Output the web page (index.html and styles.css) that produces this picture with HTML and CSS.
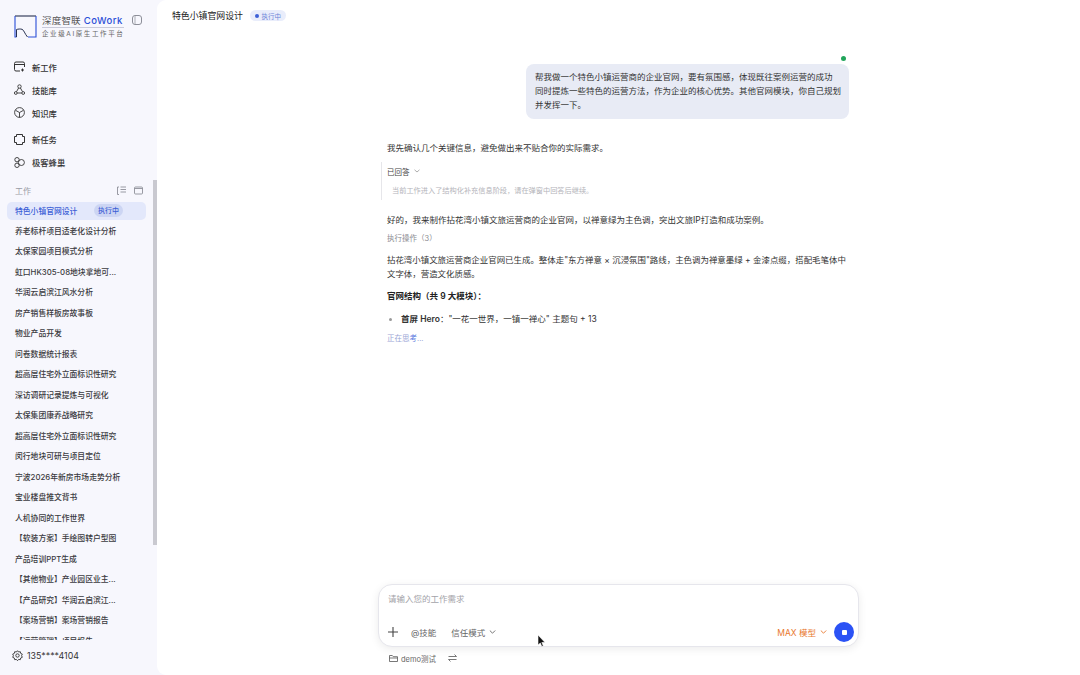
FILE: index.html
```html
<!DOCTYPE html>
<html lang="zh-CN">
<head>
    <meta charset="UTF-8">
    <meta name="viewport" content="width=device-width, initial-scale=1.0">
    <title>深度智联 CoWork</title>
    <link rel="stylesheet" href="styles.css">
</head>
<body>
    <div class="app">
        <aside class="sidebar">
            <div class="brand">
                <svg class="brand-logo" width="23" height="23" viewBox="0 0 23 23" fill="none">
                    <path d="M1 1h21" stroke="#27304f" stroke-width="1.100"/>
                    <path d="M1 1v21h1.500M14 22h8V1" stroke="#2b4fd8" stroke-width="1.100"/>
                    <path d="M2.500 22v-7.500c1.500-.5 4-.7 5.500-.2 2 .7 2.500 4.200 5.500 7.700" stroke="#27304f" stroke-width="1"/>
                </svg>
                <div class="brand-text">
                    <div class="brand-name">深度智联 <b>CoWork</b></div>
                    <div class="brand-sub">企业级AI原生工作平台</div>
                </div>
                <svg class="brand-toggle" width="10" height="10" viewBox="0 0 10 10" fill="none">
                    <rect x=".5" y=".5" width="9" height="9" rx="2.500" stroke="#8d8f99"/>
                    <path d="M3 1v8" stroke="#c5c6cc" stroke-width="1.500"/>
                </svg>
            </div>

            <nav class="nav">
                <a class="nav-item">
                    <svg width="11" height="11" viewBox="0 0 11 11" fill="none" stroke="#333"><path d="M6 10H2a1.500 1.500 0 0 1-1.500-1.500v-6A1.500 1.500 0 0 1 2 1h7a1.500 1.500 0 0 1 1.500 1.500V6M.5 3.500h10M8.500 7.500v3M7 9h3"/></svg>
                    新工作
                </a>
                <a class="nav-item">
                    <svg width="11" height="11" viewBox="0 0 11 11" fill="none" stroke="#333" stroke-width=".9"><circle cx="5.500" cy="2.500" r="1.700"/><circle cx="1.800" cy="9" r="1.400"/><circle cx="9.200" cy="9" r="1.400"/><path d="M4.600 4 2.500 7.700M6.400 4l2.100 3.700M3.200 9h4.600"/></svg>
                    技能库
                </a>
                <a class="nav-item">
                    <svg width="11" height="11" viewBox="0 0 11 11" fill="none" stroke="#333" stroke-width=".9"><circle cx="5.500" cy="5.500" r="4.900"/><path d="M1.500 3.300 5.500 5.500l4-2.200M5.500 5.500v5"/></svg>
                    知识库
                </a>
                <a class="nav-item nav-gap">
                    <svg width="11" height="11" viewBox="0 0 11 11" fill="none" stroke="#333"><path d="M2.500.5h6v2h2v6h-2v2h-6v-2h-2v-6h2z"/></svg>
                    新任务
                </a>
                <a class="nav-item">
                    <svg width="11" height="11" viewBox="0 0 11 11" fill="none" stroke="#333" stroke-width=".9"><circle cx="3" cy="2.700" r="2.200"/><circle cx="3" cy="8.300" r="2.200"/><circle cx="7.400" cy="5.500" r="3"/></svg>
                    极客蜂巢
                </a>
            </nav>

            <div class="section-head">
                <span>工作</span>
                <svg width="9" height="9" viewBox="0 0 9 9" fill="none" stroke="#8d8f99" stroke-width=".9"><path d="M.5 1v7.500h1.500M3.500 1H9M3.500 3.500H9M3.500 6H9M.5 1H2"/></svg>
                <svg class="section-last" width="9" height="9" viewBox="0 0 9 9" fill="none" stroke="#8d8f99" stroke-width=".9"><rect x=".5" y="1" width="8" height="7" rx="1"/><path d="M.5 2.500h8"/></svg>
            </div>

            <div class="work-list">
                <div class="work-item active"><span>特色小镇官网设计</span><em class="work-badge">执行中</em></div>
                <div class="work-item">养老标杆项目适老化设计分析</div>
                <div class="work-item">太保家园项目模式分析</div>
                <div class="work-item">虹口HK305-08地块拿地可...</div>
                <div class="work-item">华润云启滨江风水分析</div>
                <div class="work-item">房产销售样板房故事板</div>
                <div class="work-item">物业产品开发</div>
                <div class="work-item">问卷数据统计报表</div>
                <div class="work-item">超高层住宅外立面标识性研究</div>
                <div class="work-item">深访调研记录提炼与可视化</div>
                <div class="work-item">太保集团康养战略研究</div>
                <div class="work-item">超高层住宅外立面标识性研究</div>
                <div class="work-item">闵行地块可研与项目定位</div>
                <div class="work-item">宁波2026年新房市场走势分析</div>
                <div class="work-item">宝业楼盘推文背书</div>
                <div class="work-item">人机协同的工作世界</div>
                <div class="work-item">【软装方案】手绘图转户型图</div>
                <div class="work-item">产品培训PPT生成</div>
                <div class="work-item">【其他物业】产业园区业主...</div>
                <div class="work-item">【产品研究】华润云启滨江...</div>
                <div class="work-item">【案场营销】案场营销报告</div>
                <div class="work-item">【运营管理】项目报告</div>
            </div>

            <div class="user">
                <svg width="11" height="11" viewBox="0 0 11 11" fill="none" stroke="#333" stroke-width=".9"><path d="M5.500.7 6.600 2l1.700-.3.400 1.700 1.600.7-.7 1.600.7 1.600-1.600.7-.4 1.700-1.700-.3-1.100 1.300-1.100-1.300-1.700.3-.4-1.700-1.600-.7.700-1.600-.7-1.600 1.600-.7.4-1.700 1.700.3z"/><circle cx="5.500" cy="5.500" r="1.700"/></svg>
                135****4104
            </div>
            <div class="scroll-thumb"></div>
        </aside>

        <main class="main">
            <header class="topbar">
                <h1>特色小镇官网设计</h1>
                <span class="status"><i></i>执行中</span>
            </header>

            <section class="thread">
                <div class="online-dot"></div>
                <div class="bubble">帮我做一个特色小镇运营商的企业官网，要有氛围感，体现既往案例运营的成功<br>同时提炼一些特色的运营方法，作为企业的核心优势。其他官网模块，你自己规划<br>并发挥一下。</div>

                <p class="para first">我先确认几个关键信息，避免做出来不贴合你的实际需求。</p>

                <div class="answered">
                    <div class="answered-title">已回答 <svg width="6" height="4" viewBox="0 0 6 4" fill="none" stroke="#999" stroke-width=".8"><path d="M.5.800 3 3 5.500.800"/></svg></div>
                    <div class="answered-note">当前工作进入了结构化补充信息阶段，请在弹窗中回答后继续。</div>
                </div>

                <p class="para reply">好的，我来制作拈花湾小镇文旅运营商的企业官网，以禅意绿为主色调，突出文旅IP打造和成功案例。</p>
                <div class="ops">执行操作（3）</div>
                <p class="para summary">拈花湾小镇文旅运营商企业官网已生成。整体走"东方禅意 × 沉浸氛围"路线，主色调为禅意墨绿 + 金漆点缀，搭配毛笔体中<br>文字体，营造文化质感。</p>
                <div class="para-head">官网结构（共 9 大模块）：</div>
                <div class="clip-line">
                    <ul class="modules"><li><b>首屏 Hero</b>："一花一世界，一镇一禅心" 主题句 + 13</li></ul>
                </div>
                <div class="thinking">正在思<span>考</span>...</div>
            </section>

            <section class="composer-wrap">
                <div class="composer">
                    <div class="placeholder">请输入您的工作需求</div>
                    <div class="tools">
                        <svg class="plus" width="10" height="10" viewBox="0 0 10 10" stroke="#444" stroke-width="1.100"><path d="M5 0v10M0 5h10"/></svg>
                        <span class="tool">@技能</span>
                        <span class="tool trust">信任模式 <svg width="7" height="4" viewBox="0 0 7 4" fill="none" stroke="#666" stroke-width=".9"><path d="M.8.500 3.500 3.200 6.200.500"/></svg></span>
                        <span class="model">MAX 模型 <svg width="7" height="4" viewBox="0 0 7 4" fill="none" stroke="#e8772e" stroke-width=".9"><path d="M.8.500 3.500 3.200 6.200.500"/></svg></span>
                        <button class="stop"><i></i></button>
                    </div>
                </div>
                <div class="project">
                    <svg width="9" height="9" viewBox="0 0 9 9" fill="none" stroke="#555" stroke-width=".8"><path d="M.5 7.500v-6h2.800l1 1.200h4.200v4.800zM.5 4h8"/></svg>
                    <span>demo测试</span>
                    <svg class="swap" width="9" height="8" viewBox="0 0 9 8" fill="none" stroke="#555" stroke-width=".8"><path d="M.5 2.500h8L6.500.5M8.500 5.500h-8l2 2"/></svg>
                </div>
            </section>
        </main>
    </div>

    <svg class="cursor" width="9" height="13" viewBox="0 0 9 13"><path d="M1 0v10l2.300-2 1.500 3.500 1.500-.7-1.500-3.300H8z" fill="#111" stroke="#fff" stroke-width=".6"/></svg>
</body>
</html>
```

FILE: styles.css
```css
* {
    box-sizing: border-box;
}
html, body {
    height: 100%;
}
body {
    margin: 0;
    overflow: hidden;
    background-color: #f7f7fd;
    color: #333;
    font-family: "Inter", "Noto Sans CJK SC", sans-serif;
}
.app {
    display: flex;
    height: 675px;
}

/* Sidebar */
.sidebar {
    position: relative;
    display: flex;
    flex-direction: column;
    width: 157px;
    flex-shrink: 0;
}
.brand {
    display: flex;
    align-items: flex-start;
    height: 55px;
    padding: 15px 0 0 14px;
}
.brand-logo {
    flex-shrink: 0;
    margin-right: 5px;
}
.brand-text {
    width: 82px;
}
.brand-name {
    height: 13px;
    border-bottom: 1px solid #c9cbdb;
    font-size: 9.500px;
    line-height: 11px;
    letter-spacing: .2px;
    white-space: nowrap;
    color: #555;
}
.brand-name b {
    color: #2b4fd8;
    font-weight: 500;
    font-size: 9.500px;
    letter-spacing: .5px;
}
.brand-sub {
    margin-top: 2px;
    font-size: 6.500px;
    line-height: 9px;
    letter-spacing: 1.600px;
    white-space: nowrap;
    color: #666;
}
.brand-toggle {
    margin: 0 0 0 8px;
}
.nav {
    display: flex;
    flex-direction: column;
}
.nav-item {
    display: flex;
    align-items: center;
    gap: 7px;
    height: 23px;
    padding-left: 14px;
    font-size: 8.300px;
    font-weight: 500;
    color: #333;
}
.nav-gap {
    margin-top: 3.500px;
}
.section-head {
    display: flex;
    align-items: center;
    height: 14px;
    margin-top: 10px;
    padding-left: 15px;
    font-size: 8px;
    color: #9a9ca6;
}
.section-head span {
    flex: 1;
}
.section-head svg {
    margin-right: 8px;
}
.section-head .section-last {
    margin-right: 14px;
}
.work-list {
    flex: 1;
    min-height: 0;
    overflow: hidden;
    margin-top: 4px;
    padding-left: 7px;
}
.work-item {
    display: flex;
    align-items: center;
    justify-content: space-between;
    width: 139px;
    height: 20.500px;
    padding: 0 8px;
    font-size: 7.800px;
    font-weight: 500;
    white-space: nowrap;
    color: #3a3a40;
}
.work-item.active {
    height: 18.500px;
    padding-right: 23px;
    border-radius: 5px;
    background-color: #e3e8fb;
    color: #3d5fd6;
}
.work-badge {
    width: 29px;
    height: 13px;
    border-radius: 7px;
    background-color: #ccd5f3;
    font-style: normal;
    font-size: 7px;
    line-height: 13px;
    text-align: center;
    color: #3d5fd6;
}
.user {
    display: flex;
    align-items: center;
    gap: 4px;
    height: 35px;
    padding: 0 0 4px 12px;
    font-size: 8.800px;
    color: #333;
}
.scroll-thumb {
    position: absolute;
    top: 180px;
    right: 0;
    width: 4px;
    height: 365px;
    background-color: #c9c9d0;
}

/* Main column */
.main {
    display: flex;
    flex-direction: column;
    flex: 1;
    min-width: 0;
    background-color: #fff;
    border-radius: 9px 0 0 9px;
}
.topbar {
    display: flex;
    align-items: center;
    gap: 7px;
    height: 31px;
    padding-left: 15px;
}
.topbar h1 {
    margin: 0;
    font-size: 8.900px;
    font-weight: 400;
    color: #222;
}
.status {
    display: flex;
    align-items: center;
    gap: 2.500px;
    height: 11px;
    padding: 0 5px;
    border-radius: 6px;
    background-color: #e9edfb;
    font-size: 6.500px;
    color: #6d83d8;
}
.status i {
    width: 4px;
    height: 4px;
    border-radius: 50%;
    background-color: #3d5fd6;
}
.thread {
    position: relative;
    flex: 1;
    width: 481px;
    margin: 0 auto;
    padding: 0 9px;
}
.online-dot {
    position: absolute;
    top: 25px;
    right: 13px;
    width: 5px;
    height: 5px;
    border-radius: 50%;
    background-color: #22a55b;
}
.bubble {
    width: 323px;
    height: 55px;
    margin: 33px 1px 0 auto;
    padding: 6px 9px;
    border-radius: 8px;
    background-color: #e8ebf5;
    font-size: 8.500px;
    line-height: 14px;
    white-space: nowrap;
    color: #333;
}
.para {
    margin: 0;
    font-size: 8.500px;
    line-height: 14px;
    color: #333;
}
.para.first {
    margin-top: 22px;
}
.answered {
    height: 38px;
    margin: 7px 0 0 -6px;
    padding-left: 5px;
    border-left: 1px solid #e6e6ea;
}
.answered-title {
    display: flex;
    align-items: center;
    gap: 4px;
    height: 18px;
    font-size: 7.500px;
    color: #444;
}
.answered-note {
    margin-top: 4px;
    padding-left: 5px;
    font-size: 7.200px;
    line-height: 14px;
    color: #b4b4ba;
}
.para.reply {
    margin-top: 13px;
}
.ops {
    margin-top: 5px;
    font-size: 7.500px;
    line-height: 14px;
    color: #8c8c92;
}
.para.summary {
    margin-top: 7px;
    white-space: nowrap;
    font-size: 8.450px;
}
.para-head {
    margin-top: 8px;
    font-size: 8.500px;
    line-height: 14px;
    font-weight: 600;
    color: #222;
}
.clip-line {
    height: 11px;
    margin-top: 9px;
    overflow: hidden;
}
.modules {
    margin: 0;
    padding-left: 14px;
    font-size: 8.500px;
    line-height: 14px;
    color: #333;
}
.modules li::marker {
    color: #999;
}
.modules b {
    font-weight: 600;
}
.thinking {
    margin-top: 9px;
    font-size: 7.500px;
    line-height: 14px;
    color: #9aa6d6;
}
.thinking span {
    color: #5d7be0;
}

/* Composer */
.composer-wrap {
    width: 481px;
    margin: 0 auto;
}
.composer {
    display: flex;
    flex-direction: column;
    justify-content: space-between;
    height: 63px;
    padding: 7px 4px 4px 9px;
    border: 1px solid #e6e6ec;
    border-radius: 14px;
    box-shadow: 0 2px 8px rgba(0, 0, 0, 0.08);
    background-color: #fff;
}
.placeholder {
    font-size: 8.500px;
    line-height: 14px;
    color: #a3a3a9;
}
.tools {
    display: flex;
    align-items: center;
    height: 20px;
}
.plus {
    margin-right: 13px;
}
.tool {
    display: flex;
    align-items: center;
    gap: 4px;
    margin-right: 15px;
    font-size: 8.500px;
    color: #666;
}
.model {
    display: flex;
    align-items: center;
    gap: 4px;
    margin-left: auto;
    margin-right: 7px;
    font-size: 8.500px;
    color: #e8772e;
}
.stop {
    display: flex;
    align-items: center;
    justify-content: center;
    width: 20px;
    height: 20px;
    padding: 0;
    border: none;
    border-radius: 50%;
    background-color: #2b52f5;
}
.stop i {
    width: 5px;
    height: 5px;
    border-radius: 1px;
    background-color: #fff;
}
.project {
    display: flex;
    align-items: center;
    gap: 3px;
    height: 22px;
    margin-bottom: 6px;
    padding-left: 11px;
    font-size: 7.500px;
    color: #666;
}
.swap {
    margin-left: 9px;
}
.cursor {
    position: absolute;
    left: 537px;
    top: 635px;
}
```
